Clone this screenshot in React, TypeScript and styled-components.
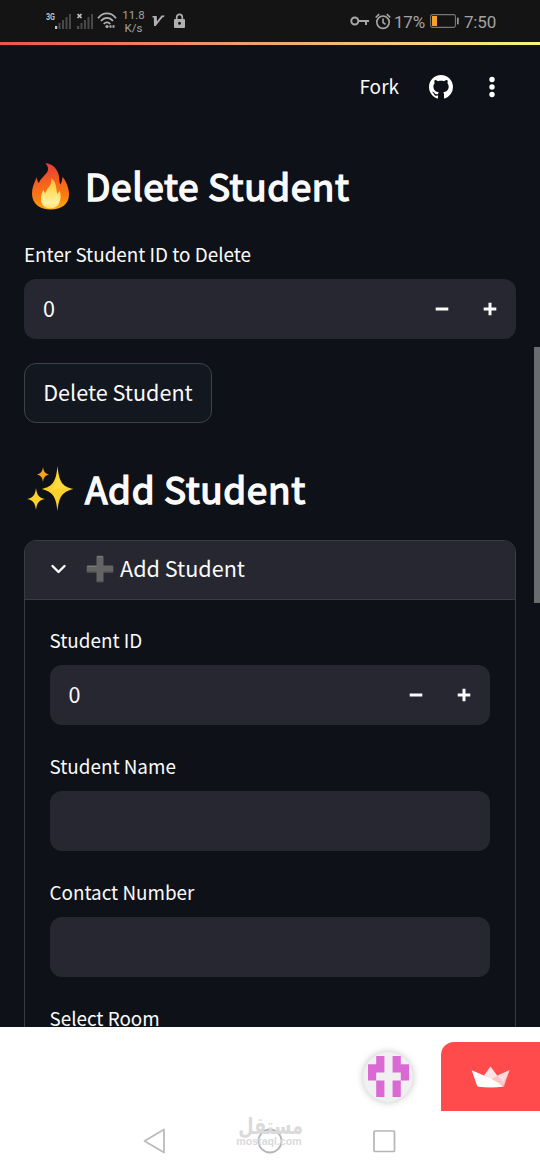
import React from "react";
import styled, { createGlobalStyle } from "styled-components";

const sans = `"Source Sans Pro", "Noto Sans CJK SC", "Noto Sans", sans-serif`;

const GlobalStyle = createGlobalStyle`
  * { box-sizing: border-box; }
  body { margin: 0; background: #fff; font-family: ${sans}; color: #fafafa; }
  button, input { font: inherit; color: inherit; }
  svg { display: block; flex: none; }
`;

const Phone = styled.div`
  width: 540px;
  height: 1170px;
  overflow: hidden;
  display: flex;
  flex-direction: column;
  background: #fff;
`;

const StatusBar = styled.div`
  height: 42px;
  flex: none;
  background: #141414;
  color: #a3a3a3;
  display: flex;
  justify-content: space-between;
  padding: 0 43px 0 46px;
  font-family: Roboto, sans-serif;
`;

const StatusGroup = styled.div`
  display: flex;
  align-items: center;
`;

const Spacer = styled.span<{ $width: number }>`
  width: ${(p) => p.$width}px;
  flex: none;
`;

const Speed = styled.div`
  width: 27px;
  margin: 2px 5px 0 3px;
  font-size: 11.5px;
  line-height: 13.5px;
  text-align: center;
`;

const StatusText = styled.span<{ $width: number }>`
  width: ${(p) => p.$width}px;
  margin-top: 1px;
  font-size: 17px;
  line-height: 20px;
  letter-spacing: -0.2px;
  white-space: nowrap;
`;

const AppView = styled.main`
  position: relative;
  height: 985px;
  flex: none;
  overflow: hidden;
  background: #0e1117;
`;

const Decoration = styled.div`
  height: 4px;
  border: solid #141414;
  border-width: 0 0 1px;
  background: linear-gradient(90deg, #ee5250, #f0b070 55%, #f8f480);
`;

const Toolbar = styled.header`
  height: 82px;
  display: flex;
  align-items: center;
  justify-content: flex-end;
  padding: 0 36px 0 0;
`;

const ForkLink = styled.span`
  font-size: 19px;
  line-height: 28px;
  margin: -2px 30px 0 0;
`;

const MenuButton = styled.button`
  border: 0;
  background: none;
  padding: 0;
  margin-left: 27px;
`;

const Page = styled.div`
  padding: 29px 24px 0;
`;

const Title = styled.h1`
  margin: 0;
  height: 58px;
  display: flex;
  align-items: center;
  gap: 11px;
  font-size: 37px;
  line-height: 58px;
  letter-spacing: 0.6px;
  font-weight: 400;
  -webkit-text-stroke: 1.5px currentColor;
  white-space: nowrap;
`;

const TitleText = styled.span`
  margin-top: -3px;
`;

const Label = styled.label`
  display: block;
  height: 28px;
  margin-bottom: 10px;
  font-size: 18.85px;
  line-height: 26px;
  white-space: nowrap;
`;

const Field = styled.div`
  & + & { margin-top: 28px; }
`;

const DeleteField = styled(Field)`
  padding-top: 26px;
`;

const InputBox = styled.div`
  height: 60px;
  border-radius: 12px;
  background: #262730;
  display: flex;
  align-items: center;
  padding: 0 19px 0 19px;
  font-size: 21.6px;
`;

const Value = styled.span`
  flex: 1;
  line-height: 30px;
  margin-top: -2px;
`;

const Stepper = styled.div`
  display: flex;
  gap: 34px;
`;

const ActionButton = styled.button`
  display: block;
  height: 60px;
  width: 188px;
  margin: 24px 0 37px;
  padding: 0 0 3px;
  border: 1.5px solid #3f4249;
  border-radius: 12px;
  background: #131720;
  font-size: 21.6px;
  white-space: nowrap;
`;

const Expander = styled.section`
  margin-top: 22px;
  height: 620px;
  border: 1.5px solid #3a3c43;
  border-radius: 12px;
  overflow: hidden;
`;

const ExpanderHeader = styled.div`
  height: 59px;
  background: #262730;
  border-bottom: 1.5px solid #3a3c43;
  display: flex;
  align-items: center;
  padding: 0 0 2px 24px;
  font-size: 21.6px;
`;

const ExpanderLabel = styled.span`
  margin: -2px 0 0 6px;
  line-height: 30px;
`;

const ExpanderBody = styled.div`
  padding: 27.4px 25px 28px 24.5px;
`;

const Scrollbar = styled.div`
  position: absolute;
  right: 0;
  top: 305px;
  width: 6px;
  height: 256px;
  background: #6b6c6f;
`;

const Footer = styled.footer`
  flex: 1;
  display: flex;
  flex-direction: column;
  padding-top: 15px;
`;

const BadgeRow = styled.div`
  display: flex;
  justify-content: flex-end;
  align-items: center;
  height: 69px;
`;

const Avatar = styled.div`
  width: 50px;
  height: 50px;
  margin-right: 28px;
  border-radius: 50%;
  background: #f0f0f0;
  box-shadow: 0 0 7px rgba(0, 0, 0, 0.25);
  display: grid;
  place-items: center;
`;

const HostBadge = styled.div`
  width: 99px;
  height: 69px;
  border-top-left-radius: 13px;
  background: #ff4b4b;
  display: grid;
  place-items: center;
`;

const NavBar = styled.nav`
  position: relative;
  height: 59px;
  display: flex;
  align-items: center;
  padding-left: 142px;
`;

const NavItem = styled.div<{ $gap?: number }>`
  margin-left: ${(p) => p.$gap ?? 0}px;
`;

const Watermark = styled.div`
  position: absolute;
  left: 229px;
  top: -1px;
  width: 80px;
  text-align: center;
  color: #dadada;
  font-family: "Liberation Sans", "DejaVu Sans", sans-serif;
  font-weight: 700;
`;

const ArabicMark = styled.div`
  height: 25px;
  font-family: "DejaVu Sans", sans-serif;
  font-size: 23px;
  line-height: 32px;
  transform: scaleX(0.77);
`;

const LatinMark = styled.div`
  font-size: 10.6px;
  line-height: 12px;
`;

const Signal = ({ type }: { type: "3g" | "x" }) => (
  <svg width={type === "3g" ? 27 : 20} height="22" viewBox={type === "3g" ? "0 0 27 22" : "0 0 20 22"}>
    <g transform={type === "3g" ? "translate(9 0)" : "translate(1 0)"}>
      <rect x="0" y="16" width="2.2" height="3" fill={type === "3g" ? "#c5c5c5" : "#505050"} />
      <rect x="3.5" y="13" width="2" height="6" fill="#484848" />
      <rect x="7" y="10" width="2" height="9" fill="#484848" />
      <rect x="10.5" y="7" width="2" height="12" fill="#484848" />
      <rect x="14" y="4" width="2" height="15" fill="#484848" />
    </g>
    {type === "3g" ? (
      <text x="0" y="10" fontFamily="Roboto" fontWeight="700" fontSize="8.5" fill="#c5c5c5" textLength="9" lengthAdjust="spacingAndGlyphs">3G</text>
    ) : (
      <path d="m1.5 4 4 4m0-4-4 4" stroke="#c5c5c5" strokeWidth="1.7" />
    )}
  </svg>
);

const Wifi = () => (
  <svg width="20" height="18" viewBox="0 0 20 18" fill="none" stroke="#b0b0b0" strokeWidth="1.8">
    <path d="M1 6.2C6-.2 14-.2 19 6.2M4 9c3.500-4.200 8.500-4.200 12 0M6.700 12c2-2.200 4.600-2.200 6.600 0" />
    <circle cx="10" cy="14.500" r="1.600" fill="#b0b0b0" stroke="none" />
    <path d="M12.500 14.500h2m1 0h2" strokeWidth="2.500" />
  </svg>
);

const VMark = () => (
  <svg width="13" height="12" viewBox="0 0 13 12">
    <path d="M.5 1h4.200l.3 5.500L9.500.5h3.300l-1.200 1.700h-1L3.700 11H2L1.800 2.500H.5z" fill="#b0b0b0" />
  </svg>
);

const Lock = () => (
  <svg width="11" height="16" viewBox="0 0 11 16">
    <path d="M2.700 7V4.200a2.800 2.800 0 0 1 5.600 0V7" fill="none" stroke="#b0b0b0" strokeWidth="1.700" />
    <path fillRule="evenodd" d="M1 6h9q1 0 1 1v7q0 1-1 1H1q-1 0-1-1V7q0-1 1-1m4.500 2.700a1.500 1.500 0 1 0 0 3 1.500 1.500 0 0 0 0-3" fill="#b0b0b0" />
  </svg>
);

const Key = () => (
  <svg width="20" height="12" viewBox="0 0 20 12" fill="none" stroke="#a8a8a8" strokeWidth="2">
    <circle cx="4.800" cy="6" r="3.500" />
    <path d="M8 6h11M16 6v4" />
  </svg>
);

const Alarm = () => (
  <svg width="16" height="17" viewBox="0 0 16 17" fill="none" stroke="#a8a8a8" strokeWidth="1.600">
    <circle cx="8" cy="9.200" r="6.200" />
    <path d="M8 5.500v4l2.500 1.800M.7 4.500 4.200 1.200M15.300 4.500l-3.500-3.300" />
  </svg>
);

const Battery = () => (
  <svg width="29" height="14" viewBox="0 0 29 14">
    <rect x=".6" y=".6" width="24.800" height="12.800" rx="1.800" fill="none" stroke="#777" strokeWidth="1.100" />
    <rect x="2" y="2" width="5" height="10" fill="#f5a22b" />
    <rect x="27" y="3.500" width="1.700" height="7" rx=".7" fill="#999" />
  </svg>
);

const GitHub = () => (
  <svg width="24" height="24" viewBox="0 0 16 16" fill="#fff">
    <path d="M8 0C3.580 0 0 3.580 0 8c0 3.540 2.290 6.530 5.470 7.590.4.070.55-.17.55-.38 0-.19-.01-.82-.01-1.490-2.010.37-2.530-.49-2.690-.94-.09-.23-.48-.94-.82-1.130-.28-.15-.68-.52-.01-.53.63-.01 1.080.58 1.230.82.72 1.210 1.870.87 2.330.66.07-.52.28-.87.51-1.070-1.780-.2-3.640-.89-3.640-3.950 0-.87.31-1.590.82-2.150-.08-.2-.36-1.020.08-2.120 0 0 .67-.21 2.200.82.64-.18 1.320-.27 2-.27s1.360.09 2 .27c1.530-1.040 2.200-.82 2.200-.82.44 1.100.16 1.920.08 2.120.51.56.82 1.270.82 2.150 0 3.070-1.870 3.750-3.650 3.950.29.25.54.73.54 1.480 0 1.070-.01 1.930-.01 2.200 0 .21.15.46.55.38A8.010 8.010 0 0 0 16 8c0-4.420-3.580-8-8-8" />
  </svg>
);

const Dots = () => (
  <svg width="24" height="24" viewBox="0 0 24 24" fill="#fff">
    <circle cx="12" cy="4.500" r="2.700" />
    <circle cx="12" cy="12" r="2.700" />
    <circle cx="12" cy="19.500" r="2.700" />
  </svg>
);

const Flame = () => (
  <svg width="50" height="50" viewBox="0 0 50 50">
    <defs>
      <linearGradient id="flameOuter" x1=".4" y1="0" x2=".5" y2="1">
        <stop offset="0" stopColor="#e5383b" />
        <stop offset=".4" stopColor="#f4601f" />
        <stop offset=".75" stopColor="#fb7d10" />
        <stop offset="1" stopColor="#fca814" />
      </linearGradient>
      <linearGradient id="flameInner" x1=".5" y1="0" x2=".5" y2="1">
        <stop offset="0" stopColor="#fdb72d" />
        <stop offset=".4" stopColor="#fedc60" />
        <stop offset=".8" stopColor="#fff0a0" />
        <stop offset="1" stopColor="#fde070" />
      </linearGradient>
    </defs>
    <path d="M21.300 2c6.700.6 12.200 5.500 13.500 12.500.7 3.600.4 6.700 1.500 9 1.200-1.300 1.600-3.500 2.300-7.500 3.500 3.800 6.400 11.300 6.400 17.500C45 43.200 37.200 48.500 26.700 48.500 16 48.500 8 43.200 8 32.500c0-5.500 2-10.200 4.800-16.200.3 2.600.8 4.400 2 5.700 2-5 6.400-7.500 8.700-11.500 1.300-2.300.5-5.500-2.200-8.500" fill="url(#flameOuter)" />
    <path d="M27.300 17.500c5.800 3.700 4.500 10.300 6 15.500 1-.8 1.700-2.300 2-3.500 1.200 2.200 1.500 4.500 1.200 7.500-.7 7-4.500 10.500-10 10.500S17 44 17 38c0-4 1.200-7 2.500-9.200.4 1.600.9 2.700 1.900 3.500 1.200-4.500 3.800-5.800 5.100-8.800.8-2 .9-4 .8-6" fill="url(#flameInner)" />
  </svg>
);

const Sparkles = () => (
  <svg width="50" height="50" viewBox="0 0 50 50">
    <path d="M33.500 2c1.500 14 3.500 20.500 16 23-12.500 3-14.500 9-16 22-1.500-13-3.500-19-16-22 12.500-2.500 14.500-9 16-23" fill="#fdd02b" />
    <path d="M33.500 4c.5 11 1 18 14 21-11-1-16 0-21 2 6-4 7-15 7-23" fill="#ffe14d" opacity=".65" />
    <path d="M12 24c1 7 2.500 9.500 9 11-6.500 1.500-8 4-9 11-1-7-2.500-9.500-9-11 6.500-1.500 8-4 9-11" fill="#fdd02b" />
    <path d="M19 3c.7 4.500 1.800 6.500 6 7.500-4.200 1-5.300 3-6 7.500-.7-4.500-1.800-6.500-6-7.500 4.200-1 5.300-3 6-7.500" fill="#f4a320" />
  </svg>
);

const HeavyPlus = () => (
  <svg width="28" height="28" viewBox="0 0 28 28">
    <path d="M10.500 1.500q0-.8.800-.8h5.400q.8 0 .8.800v9h9q.8 0 .8.800v5.400q0 .8-.8.800h-9v9q0 .8-.8.800h-5.400q-.8 0-.8-.8v-9h-9q-.8 0-.8-.8v-5.400q0-.8.800-.8h9z" fill="#646464" />
    <path d="M11.200 1.700h5M1.700 11.300h9" stroke="#808080" strokeWidth="1" />
    <path d="M1.500 17h8.800M17.700 17h8.800M11.500 26.700h5" stroke="#4d4d4d" strokeWidth="1" />
  </svg>
);

const Chevron = () => (
  <svg width="20" height="20" viewBox="0 0 20 20" fill="none" stroke="#fafafa" strokeWidth="2.400" strokeLinecap="round" strokeLinejoin="round">
    <path d="m3.500 7 6 6 6-6" />
  </svg>
);

const Sign = ({ plus }: { plus?: boolean }) => (
  <svg width="14" height="14" viewBox="0 0 14 14" fill="none" stroke="#fafafa" strokeWidth="3">
    <path d={plus ? "M.7 7h12.600M7 .7v12.600" : "M.7 7h12.600"} />
  </svg>
);

const Identicon = () => (
  <svg width="41" height="41" viewBox="0 0 5 5" fill="#da69d4">
    <path d="M1 0h1v2H1v1H0V1h1zM3 0h1v1h1v2H4V2H3zM1 3h1v2H1zM3 3h1v2H3z" />
  </svg>
);

const Crown = () => (
  <svg width="40" height="24" viewBox="0 0 40 24">
    <path d="M19.500 1.500 26.500 11 33.500 20.500 11 14 13 10.500z" fill="#ffe3e5" />
    <path d="M38.500 5.200 33 21 20 13.800z" fill="#ffc4c8" />
    <path d="m38.500 5.200-12 5.300 5.500 7z" fill="#ffdadd" />
    <path d="m.7 5.200 19 8.300 13.300 8Q20 23.500 7.300 21.800 6.500 21.700 6 20.500z" fill="#fff" />
    <path d="m.7 5.200 12 5.300 7 3.300z" fill="#fff0f1" />
  </svg>
);

const NumberInput = () => (
  <InputBox>
    <Value>0</Value>
    <Stepper>
      <Sign />
      <Sign plus />
    </Stepper>
  </InputBox>
);

export default function App() {
  return (
    <Phone>
      <GlobalStyle />
      <StatusBar>
        <StatusGroup>
          <Signal type="3g" />
          <Spacer $width={3} />
          <Signal type="x" />
          <Spacer $width={1} />
          <Wifi />
          <Speed>11.8<br />K/s</Speed>
          <VMark />
          <Spacer $width={9} />
          <Lock />
        </StatusGroup>
        <StatusGroup>
          <Key />
          <Spacer $width={5} />
          <Alarm />
          <Spacer $width={3} />
          <StatusText $width={36}>17%</StatusText>
          <Battery />
          <Spacer $width={5} />
          <StatusText $width={33}>7:50</StatusText>
        </StatusGroup>
      </StatusBar>
      <AppView>
        <Decoration />
        <Toolbar>
          <ForkLink>Fork</ForkLink>
          <GitHub />
          <MenuButton aria-label="Menu"><Dots /></MenuButton>
        </Toolbar>
        <Page>
          <Title><Flame /><TitleText>Delete Student</TitleText></Title>
          <DeleteField>
            <Label>Enter Student ID to Delete</Label>
            <NumberInput />
          </DeleteField>
          <ActionButton>Delete Student</ActionButton>
          <Title><Sparkles /><TitleText>Add Student</TitleText></Title>
          <Expander>
            <ExpanderHeader>
              <Chevron />
              <Spacer $width={17} />
              <HeavyPlus />
              <ExpanderLabel>Add Student</ExpanderLabel>
            </ExpanderHeader>
            <ExpanderBody>
              <Field>
                <Label>Student ID</Label>
                <NumberInput />
              </Field>
              <Field>
                <Label>Student Name</Label>
                <InputBox />
              </Field>
              <Field>
                <Label>Contact Number</Label>
                <InputBox />
              </Field>
              <Field>
                <Label>Select Room</Label>
              </Field>
            </ExpanderBody>
          </Expander>
        </Page>
        <Scrollbar />
      </AppView>
      <Footer>
        <BadgeRow>
          <Avatar><Identicon /></Avatar>
          <HostBadge><Crown /></HostBadge>
        </BadgeRow>
        <NavBar>
          <Watermark>
            <ArabicMark lang="ar">مستقل</ArabicMark>
            <LatinMark>mostaql.com</LatinMark>
          </Watermark>
          <NavItem>
            <svg width="24" height="26" viewBox="0 0 24 26" fill="none" stroke="#bbb" strokeWidth="1.800" strokeLinejoin="round">
              <path d="M2.500 13 22 1.500v23z" />
            </svg>
          </NavItem>
          <NavItem $gap={91}>
            <svg width="26" height="26" viewBox="0 0 26 26" fill="none" stroke="#b5b5b5" strokeWidth="1.800">
              <circle cx="13" cy="13" r="11.500" />
            </svg>
          </NavItem>
          <NavItem $gap={89}>
            <svg width="24" height="24" viewBox="0 0 24 24" fill="none" stroke="#b5b5b5" strokeWidth="1.700">
              <rect x="2" y="2" width="20.500" height="20.500" rx="1" />
            </svg>
          </NavItem>
        </NavBar>
      </Footer>
    </Phone>
  );
}
